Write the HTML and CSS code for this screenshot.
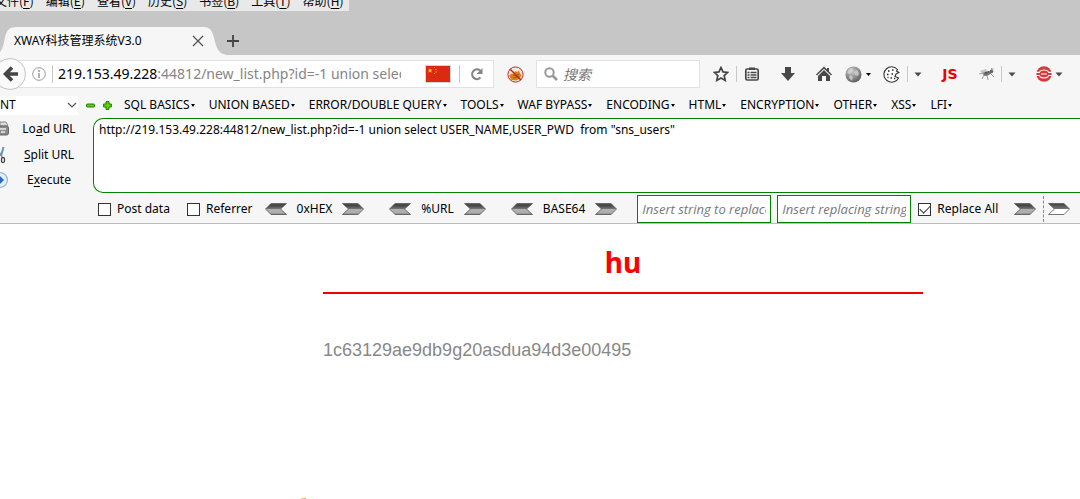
FILE: index.html
```html
<!DOCTYPE html>
<html lang="zh-CN">
<head>
<meta charset="utf-8">
<title>XWAY科技管理系统V3.0</title>
<link rel="stylesheet" href="styles.css">
</head>
<body>
<svg class="defs" aria-hidden="true">
  <defs>
    <linearGradient id="steel" x1="0" y1="0" x2="0" y2="1">
      <stop offset="0" stop-color="#5f5f5f"/><stop offset=".15" stop-color="#404040"/><stop offset=".5" stop-color="#777"/><stop offset=".52" stop-color="#b0b0b0"/><stop offset=".88" stop-color="#adadad"/><stop offset="1" stop-color="#555"/>
    </linearGradient>
    <linearGradient id="steel-white" x1="0" y1="0" x2="0" y2="1">
      <stop offset="0" stop-color="#404040"/><stop offset=".5" stop-color="#777"/><stop offset=".52" stop-color="#fff"/><stop offset="1" stop-color="#fff"/>
    </linearGradient>
    <radialGradient id="globe-fill" cx=".4" cy=".3" r=".7"><stop offset="0" stop-color="#ccc"/><stop offset="1" stop-color="#606060"/></radialGradient>
    <symbol id="arrow-right" viewBox="0 0 22 12"><path d="M.5.5H16L21.5 6 16 11.5H.5L6.500 6Z" fill="url(#steel)" stroke="#555" stroke-width=".8"/></symbol>
    <symbol id="arrow-left" viewBox="0 0 22 12"><path d="M21.500.5H6L.5 6 6 11.500H21.500L15.500 6Z" fill="url(#steel)" stroke="#555" stroke-width=".8"/></symbol>
    <symbol id="caret" viewBox="0 0 8 5"><path d="M.5.5h7L4 4.500Z" fill="#4a4a4a"/></symbol>
  </defs>
</svg>

<nav class="app-menu">
  <button>文件(<u>F</u>)</button><button>编辑(<u>E</u>)</button><button>查看(<u>V</u>)</button><button>历史(<u>S</u>)</button><button>书签(<u>B</u>)</button><button>工具(<u>T</u>)</button><button>帮助(<u>H</u>)</button>
</nav>

<div class="tab-bar">
  <div class="tab">
    <svg class="tab-shape" viewBox="0 0 228 28" preserveAspectRatio="none" aria-hidden="true"><path d="M0 28V25C3 22 4 15 5 10C7 3 9 0 17 0H204C212 0 213 4 215 11C217 20 219 27 228 28Z" fill="#f6f6f6"/></svg>
    <span class="tab-title">XWAY科技管理系统V3.0</span>
    <button class="tab-close" aria-label="Close tab"><svg width="12" height="12" viewBox="0 0 12 12"><path d="M1 1 11 11M11 1 1 11" stroke="#555" stroke-width="1.300"/></svg></button>
  </div>
  <button class="tab-new" aria-label="New tab"><svg width="12" height="12" viewBox="0 0 12 12"><path d="M6 0V12M0 6H12" stroke="#444" stroke-width="1.800"/></svg></button>
</div>

<div class="nav-bar">
  <div class="url-bar">
    <button class="back" aria-label="Back"><svg width="16" height="16" viewBox="0 0 16 16"><path d="M15 8H3M9 1.500 2.500 8 9 14.500" fill="none" stroke="#444" stroke-width="3.600"/></svg></button>
    <svg class="info" width="14" height="14" viewBox="0 0 14 14"><circle cx="7" cy="7" r="6.300" fill="none" stroke="#999"/><path d="M7 6V11M7 3V5" stroke="#999" stroke-width="1.500"/></svg>
    <i class="rule"></i>
    <div class="address" role="textbox" aria-label="Address"><b>219.153.49.228</b>:44812/new_list.php?id=-1 union select</div>
    <svg class="flag" width="26" height="18" viewBox="0 0 26 18"><path fill="#dc2a12" stroke="#d4d4d4" d="M.5.5h25v17H.5Z"/><path fill="#fc3" d="m5 3 .7 1.700h1.900L6.100 5.800l.6 1.900L5 6.600 3.400 7.700 4 5.800 2.500 4.700h1.900ZM9 2h1v1H9ZM10.500 4h1v1h-1ZM10.500 6.500h1v1h-1ZM9 8h1v1H9Z"/></svg>
    <i class="rule"></i>
    <button class="reload" aria-label="Reload"><svg width="14" height="14" viewBox="0 0 14 14"><path d="M10.500 10.500A4.800 4.800 0 1 1 10 3.500" fill="none" stroke="#858585" stroke-width="2.200"/><path d="M12.500 1V7H6.500Z" fill="#858585"/></svg></button>
  </div>
  <button class="icon proxy" aria-label="Blocker"><svg width="17" height="17" viewBox="0 0 17 17"><circle cx="8.500" cy="8.500" r="7.600" fill="#eee6dc" stroke="#c22"/><path d="M2.500 9 5 7.500 7 8l1-3 2 1 2-1.500 1 3 1.500 1.500-2 4-4 1.500-4-.5L3 11.500Z" fill="#d98012"/><path d="m6 9 3 1 3-2M6 12l4-1 2 1" stroke="#a35a10" fill="none"/><path d="M3 3 14 14" stroke="#c22" stroke-width="1.500"/></svg></button>
  <label class="search"><svg width="14" height="14" viewBox="0 0 14 14"><circle cx="5.500" cy="5.500" r="4.200" fill="none" stroke="#999" stroke-width="2"/><path d="m8.500 8.500 4.500 4.500" stroke="#999" stroke-width="2.600"/></svg><input type="text" placeholder="搜索" aria-label="搜索"></label>
  <button class="icon w30" aria-label="Bookmark"><svg width="16" height="16" viewBox="0 0 16 16"><path d="m8 1.500 2 4.400 4.700.5-3.500 3.200 1 4.800L8 12l-4.200 2.400 1-4.800L1.300 6.400 6 5.900Z" fill="none" stroke="#444" stroke-width="1.700"/></svg></button>
  <i class="rule"></i>
  <button class="icon w30" aria-label="Bookmarks list"><svg width="16" height="16" viewBox="0 0 16 16"><rect x="1.800" y="3" width="12.400" height="11" rx="1.500" fill="none" stroke="#484848" stroke-width="1.700"/><path d="M5 1.500H11V4H5Z" fill="#484848"/><path d="M3.500 6.500h2M6.500 6.500h6M3.500 9h2M6.500 9h6M3.500 11.500h2M6.500 11.500h6" stroke="#484848" stroke-width="1.300"/></svg></button>
  <button class="icon download" aria-label="Downloads"><svg width="16" height="16" viewBox="0 0 16 16"><path d="M5 1H11V7H15L8 15 1 7H5Z" fill="#484848"/></svg></button>
  <button class="icon w36" aria-label="Home"><svg width="16" height="16" viewBox="0 0 16 16"><path d="M8 4 14 10V15H10V10H6V15H2V10ZM0 8.500 8 .5 11 3.500V2h2V5.500L16 8.500 15 9.500 8 2.800 1 9.500Z" fill="#484848"/></svg></button>
  <button class="icon w22" aria-label="Globe"><svg width="17" height="17" viewBox="0 0 17 17"><circle cx="8.500" cy="8.500" r="8" fill="url(#globe-fill)"/><path d="m4 3 3-1 1 2-2 3-2 1-2-1ZM9 6l3-2 2 3-1 3-3-1ZM5 9l3 2-1 4-3-3Z" fill="#ddd" opacity=".65"/></svg></button>
  <svg class="mini" width="5" height="3" viewBox="0 0 5 3"><path d="M0 0H5L2.500 3Z"/></svg>
  <button class="icon cookie" aria-label="Cookies"><svg width="17" height="17" viewBox="0 0 17 17"><path d="M8.500.8A7.700 7.700 0 1 0 15.500 12L12 10.500 13 8 16 6.500 13.500 5 14.500 3.500A8 8 0 0 0 8.500.8Z" fill="#fff" stroke="#333" stroke-width="1.100"/><path d="M5 5h1.500M9 4h1.500M4 8.500h1.500M8.500 8h1.500M7.500 12h1.500M11 12.500h1.200M4.500 11.500h1" stroke="#222" stroke-width="1.500"/></svg></button>
  <i class="rule"></i>
  <button class="icon w20" aria-label="Cookie options"><svg width="8" height="5"><use href="#caret"/></svg></button>
  <button class="icon js">JS</button>
  <button class="icon fly" aria-label="Fly"><svg width="16" height="14" viewBox="0 0 16 14"><path d="M1 4 7 2 9 6 4 7ZM10 5l3-4 2 1-3 5Z" fill="#c4c4c4"/><ellipse cx="8" cy="6.500" rx="4" ry="2" fill="#777" transform="rotate(-20 8 6.500)"/><path d="M5 8 3 12M8 8l1 5M11 6l4 4M5 6 0 7M11 5l2-4" stroke="#888" stroke-width=".8"/><circle cx="12.500" cy="4.500" r="1.800" fill="#666"/><path d="M6 6h2M9 5h1" stroke="#333"/></svg></button>
  <i class="rule"></i>
  <button class="icon w20" aria-label="Fly options"><svg width="8" height="5"><use href="#caret"/></svg></button>
  <button class="icon globe-red" aria-label="Proxy"><svg width="16" height="16" viewBox="0 0 16 16"><circle cx="8" cy="8" r="7.700" fill="#d33c3c"/><path d="M0 6.300h4M12 6.300h4M0 9.500h4M12 9.500h4" stroke="#f6f6f6" stroke-width="1.200"/><path d="M3.500 5.500Q8 2.500 12.500 5.500M3.500 10.500Q8 13.500 12.500 10.500M5 8h6" fill="none" stroke="#fff" stroke-width="1.100"/></svg></button>
  <svg class="caret" width="8" height="5"><use href="#caret"/></svg>
</div>

<div class="hack-menu">
  <div class="type"><select aria-label="Type"><option>NT</option></select><svg width="10" height="6" viewBox="0 0 10 6"><path d="m1 1 4 4 4-4" fill="none" stroke="#555" stroke-width="1.200"/></svg></div>
  <button class="sign" aria-label="Remove"><svg width="9" height="9" viewBox="0 0 9 9"><rect x=".5" y="3" width="8" height="3" rx="1" fill="#5bd00e" stroke="#277a08"/></svg></button>
  <button class="sign" aria-label="Add"><svg width="9" height="9" viewBox="0 0 9 9"><path d="M3 .6h3V3h2.400v3H6v2.400H3V6H.6V3H3Z" fill="#5bd00e" stroke="#277a08"/></svg></button>
  <div class="menus">
    <button>SQL BASICS</button><button>UNION BASED</button><button>ERROR/DOUBLE QUERY</button><button>TOOLS</button><button>WAF BYPASS</button><button>ENCODING</button><button>HTML</button><button>ENCRYPTION</button><button>OTHER</button><button>XSS</button><button>LFI</button>
  </div>
</div>

<div class="hack-main">
  <div class="actions">
    <button><svg width="9" height="16" viewBox="0 0 9 16"><path d="M0 1H6L8 5H0Z" fill="#ddd" stroke="#888"/><rect x="-3" y="5" width="11.500" height="9" rx="2" fill="#8a8a8a" stroke="#666"/><path d="M0 8H6M1 11h4" stroke="#eee" stroke-width="1.400"/></svg><span>Lo<u>a</u>d URL</span></button>
    <button><svg width="9" height="18" viewBox="0 0 9 18"><path d="M3.500 1 1 10" stroke="#5d97b5" stroke-width="2"/><path d="M-2 4 2 11" stroke="#888" stroke-width="1.500"/><rect x="1.500" y="11.500" width="3" height="5" rx="1.500" fill="none" stroke="#444" stroke-width="1.300"/></svg><span><u>S</u>plit URL</span></button>
    <button><svg width="9" height="16" viewBox="0 0 9 16"><circle cx="0" cy="8" r="7.400" fill="#e6f0fa" stroke="#9bb8dd" stroke-width="1.300"/><path d="M0 4 4 8 0 12Z" fill="#2b68c0"/></svg><span>E<u>x</u>ecute</span></button>
  </div>
  <textarea class="query" aria-label="URL" spellcheck="false">http://219.153.49.228:44812/new_list.php?id=-1 union select USER_NAME,USER_PWD  from "sns_users"</textarea>
</div>

<div class="hack-tools">
  <label class="check post"><input type="checkbox">Post data</label>
  <label class="check"><input type="checkbox">Referrer</label>
  <div class="codec"><button aria-label="Decode hex"><svg width="22" height="12"><use href="#arrow-left"/></svg></button><span>0xHEX</span><button aria-label="Encode hex"><svg width="22" height="12"><use href="#arrow-right"/></svg></button></div>
  <div class="codec"><button aria-label="Decode URL"><svg width="22" height="12"><use href="#arrow-left"/></svg></button><span>%URL</span><button aria-label="Encode URL"><svg width="22" height="12"><use href="#arrow-right"/></svg></button></div>
  <div class="codec"><button aria-label="Decode base64"><svg width="22" height="12"><use href="#arrow-left"/></svg></button><span>BASE64</span><button aria-label="Encode base64"><svg width="22" height="12"><use href="#arrow-right"/></svg></button></div>
  <div class="replace">
    <input class="field" type="text" placeholder="Insert string to replace" aria-label="Insert string to replace">
    <input class="field" type="text" placeholder="Insert replacing string" aria-label="Insert replacing string">
    <label class="check all"><input type="checkbox" checked>Replace All</label>
    <button aria-label="Replace"><svg width="22" height="12"><use href="#arrow-right"/></svg></button>
    <i class="dash"></i>
    <button aria-label="Replace next"><svg width="22" height="12" viewBox="0 0 22 12"><path d="M.5.5H16L21.500 6 16 11.500H.5L6.500 6Z" fill="url(#steel-white)" stroke="#555" stroke-width=".8"/></svg></button>
  </div>
</div>

<main class="page">
  <article>
    <h1>hu</h1>
    <p>1c63129ae9db9g20asdua94d3e00495</p>
  </article>
  <svg class="peek" width="8" height="1" viewBox="0 0 8 1"><path d="M0 1Q3 0 6 .2V1Z" fill="#f47b3b"/></svg>
</main>
</body>
</html>
```

FILE: styles.css
```css
* { box-sizing: border-box; }
html { background: #fff; }
body {
  margin: 0;
  min-height: 100vh;
  display: flex;
  flex-direction: column;
  overflow: hidden;
  background: linear-gradient(#c6c6c6 55px, #fff 55px);
  color: #000;
  font: 12px/16px "Noto Sans", "Noto Sans CJK SC", sans-serif;
}
button {
  flex: none;
  margin: 0;
  padding: 0;
  border: 0;
  background: none;
  color: inherit;
  font: inherit;
  white-space: nowrap;
}
svg { display: block; flex: none; }
.defs { position: absolute; width: 0; height: 0; }

.app-menu {
  display: flex;
  align-items: flex-end;
  gap: 12px;
  align-self: flex-start;
  height: 11px;
  margin-left: -5px;
  padding: 0 6px 2px 0;
  overflow: hidden;
  background: #e9e9e9;
  font-family: "Noto Sans CJK SC", sans-serif;
}

.tab-bar {
  display: flex;
  align-items: stretch;
  height: 44px;
  padding-top: 16px;
  background: #c6c6c6;
}
.tab {
  position: relative;
  display: flex;
  align-items: center;
  justify-content: space-between;
  width: 227px;
  padding: 0 23px 0 14px;
}
.tab-shape { position: absolute; inset: 0; width: 100%; height: 100%; }
.tab-title, .tab-close { position: relative; }
.tab-new { width: 12px; }

.nav-bar {
  display: flex;
  align-items: center;
  height: 38px;
  background: #f6f6f6;
}
.rule { flex: none; width: 1px; height: 16px; background: #c8c8c8; }
.url-bar {
  flex: 1;
  min-width: 0;
  display: flex;
  align-items: center;
  height: 28px;
  border: 1px solid #e2e2e2;
  border-left: 0;
  background: #fff;
}
.url-bar .rule { height: 18px; }
.back {
  display: grid;
  place-items: center;
  width: 32px;
  height: 32px;
  margin-left: -6px;
  padding-left: 1px;
  border: 1px solid #c4c4c4;
  border-radius: 50%;
  background: #fafafa;
}
.info { margin: 0 6px; }
.address {
  flex: 1;
  min-width: 0;
  margin: 0 24px 0 5px;
  overflow: hidden;
  white-space: nowrap;
  color: #858585;
  font-size: 14px;
  line-height: 20px;
}
.address b { font-weight: 400; color: #000; }
.flag { margin-right: 8px; }
.reload { display: grid; place-items: center; width: 33px; }
.icon { display: grid; place-items: center; }
.proxy { width: 42px; }
.search {
  display: flex;
  align-items: center;
  gap: 5px;
  width: 164px;
  height: 28px;
  margin-right: 6px;
  padding: 0 7px;
  border: 1px solid #e2e2e2;
  background: #fff;
}
.search input {
  flex: 1;
  min-width: 0;
  padding: 0;
  border: 0;
  background: none;
  font: italic 14px/20px "Noto Sans CJK SC", sans-serif;
}
input::placeholder { color: #777; opacity: 1; }
.w20 { width: 20px; }
.w22 { width: 22px; }
.w30 { width: 30px; }
.w36, .download { width: 36px; }
.download { margin-left: 3px; }
.mini { margin: 0 4px 0 2px; }
.cookie { width: 30px; margin-left: 1px; margin-right: 1px; }
.js { width: 44px; color: #f00000; font: bold 14px/16px "DejaVu Sans", sans-serif; }
.fly { width: 29px; }
.globe-red { width: 22px; margin-left: 11px; }
.caret { margin-right: 17px; }

.hack-menu {
  display: flex;
  align-items: center;
  height: 25px;
  padding-bottom: 1px;
  background: #f6f6f6;
}
.type { position: relative; width: 78px; height: 19px; margin-right: 8px; }
.type select {
  width: 100%;
  height: 100%;
  padding: 0;
  border: 0;
  appearance: none;
  background: #fff;
  font: inherit;
}
.type svg { position: absolute; right: 1px; top: 6px; }
.sign { margin-right: 8px; }
.menus { display: flex; gap: 14px; margin-left: 4px; }
.menus button { display: flex; align-items: center; }
.menus button::after {
  content: "";
  margin-left: 1px;
  border: 2px solid transparent;
  border-top: 3px solid #000;
  border-bottom: 0;
}

.hack-main { display: flex; height: 75px; background: #f6f6f6; }
.actions {
  display: flex;
  flex-direction: column;
  justify-content: space-between;
  width: 93px;
  padding: 1px 0 3px;
}
.actions button {
  display: grid;
  grid-template-columns: 9px 1fr;
  align-items: center;
  height: 20px;
  padding-right: 4px;
}
u { text-underline-offset: 2px; }
.query {
  flex: 1;
  min-width: 0;
  margin: 0;
  padding: 3px 5px;
  resize: none;
  overflow: hidden;
  border: 1px solid #008000;
  border-right: 0;
  border-radius: 10px 0 0 10px;
  background: #fff;
  color: #000;
  font: inherit;
  white-space: pre;
}

.hack-tools {
  display: flex;
  align-items: center;
  height: 31px;
  padding: 2px 0 0 98px;
  border-bottom: 1px solid #bcbcbc;
  background: #f6f6f6;
}
.check { display: flex; flex: none; align-items: center; gap: 6px; white-space: nowrap; }
.post { width: 89px; }
.check input {
  display: grid;
  place-items: center;
  width: 13px;
  height: 13px;
  margin: 0;
  appearance: none;
  border: 1px solid #333;
  background: #fff;
}
.check input:checked::after {
  content: "";
  width: 9px;
  height: 5px;
  margin-top: -3px;
  border: solid #333;
  border-width: 0 0 1px 1px;
  transform: rotate(-45deg);
}
.codec { display: flex; align-items: center; gap: 10px; margin-left: 25px; }
.check + .codec { margin-left: 12px; }
.replace { display: flex; flex: 1; align-items: center; margin-left: 20px; }
.field {
  width: 134px;
  height: 28px;
  margin: 0 6px 0 0;
  padding: 0 4px;
  border: 1px solid #008000;
  background: #fff;
  font: italic 13px/16px "Open Sans", sans-serif;
}
.all { width: 96px; margin-left: 1px; }
.dash { height: 26px; margin: 0 4px 0 7px; border-left: 1px dashed #888; }

.page { flex: 1; display: flex; flex-direction: column; background: #fff; }
.page article { width: 600px; margin-left: 323px; }
h1 {
  margin: 0 0 46px;
  padding: 18px 0 10px;
  border-bottom: 2px solid #f00000;
  color: #ff0000;
  text-align: center;
  font-size: 28px;
  line-height: 40px;
}
.page p { margin: 0; color: #888; font: 18px/20px "Liberation Sans", Arial, sans-serif; }
.peek { margin: auto 0 0 300px; }
```
